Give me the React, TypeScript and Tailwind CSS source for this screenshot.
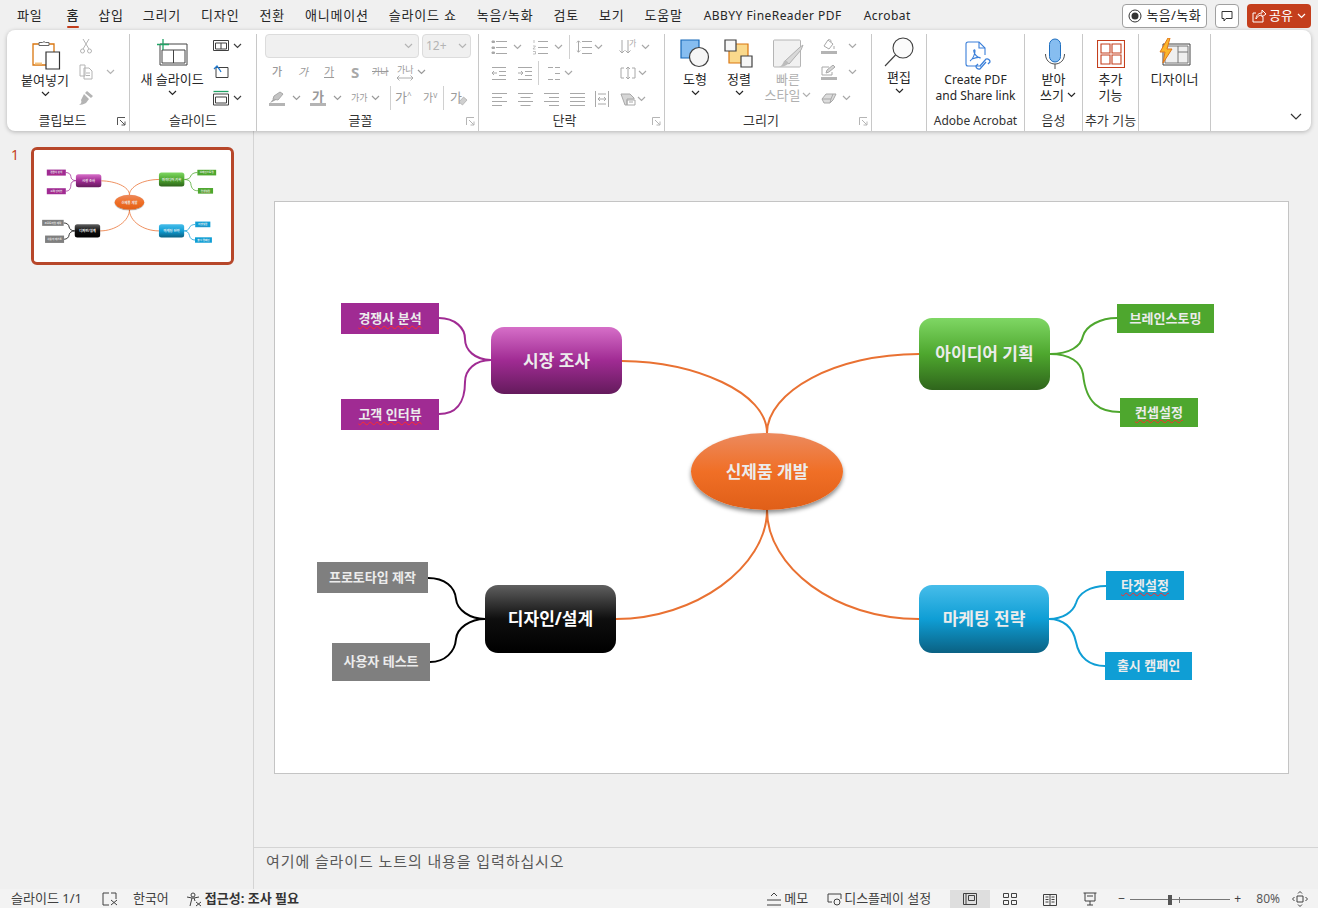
import type { ReactNode } from "react";

function Chev({ className = "" }: { className?: string }) {
  return (
    <svg width="9" height="6" viewBox="0 0 9 6" fill="none" stroke="currentColor" strokeWidth="1.2" className={`shrink-0 ${className}`}>
      <path d="M1 1l3.500 3.500L8 1" />
    </svg>
  );
}

function Ico({ w = 16, h = 16, children }: { w?: number; h?: number; children: ReactNode }) {
  return (
    <svg width={w} height={h} viewBox={`0 0 ${w} ${h}`} fill="none" stroke="currentColor" strokeWidth="1" className="shrink-0">
      {children}
    </svg>
  );
}

function Launcher({ dim = true }: { dim?: boolean }) {
  return (
    <svg width="9" height="9" viewBox="0 0 9 9" fill="none" stroke={dim ? "#b5b5b5" : "#555"} strokeWidth="1" className="absolute right-[3px] bottom-[5px]">
      <path d="M.5 8V.5H8M3 3l5 5M8 4.500V8H4.500" />
    </svg>
  );
}

function Group({ label, className, launcher, dim, children }: { label?: ReactNode; className: string; launcher?: boolean; dim?: boolean; children: ReactNode }) {
  return (
    <div className={`relative flex shrink-0 flex-col border-r border-[#c8c8c8] ${className}`}>
      <div className="h-[78px]">{children}</div>
      <div className={`text-center text-[13px] leading-[17px] text-[#333] whitespace-nowrap ${launcher ? "pr-[14px]" : ""}`}>{label}</div>
      {launcher && <Launcher dim={dim} />}
    </div>
  );
}

// paragraph glyphs: each row of the icon is a start x and a length
function Rows({ rows, children }: { rows: [number, number][]; children?: ReactNode }) {
  const step = rows.length > 1 ? 12 / (rows.length - 1) : 0;
  return (
    <Ico>
      {rows.map(([x, len], i) => (
        <path key={i} d={`M${x} ${2.500 + i * step}h${len}`} />
      ))}
      {children}
    </Ico>
  );
}

function Clipboard() {
  return (
    <svg width="30" height="32" viewBox="0 0 30 32" fill="none" className="ml-[3px] shrink-0">
      <path d="M1 5h21v21H1z" fill="#fff" stroke="#d9760f" strokeWidth="1.300" />
      <path d="M3 24.500h7" stroke="#f5c37f" strokeWidth="2" />
      <path d="M7 6.500V3.500h3.500a2 2 0 0 1 3 0H17v3z" fill="#fff" stroke="#666" />
      <path d="M14 13h13.500v17H14z" fill="#fff" stroke="#333" strokeWidth="1.200" />
    </svg>
  );
}

function NewSlide() {
  return (
    <svg width="32" height="28" viewBox="0 0 32 28" fill="none" className="shrink-0">
      <path d="M4 5h27v21H4z" stroke="#444" />
      <path d="M6 11h23v13H6zM17.500 11v13" stroke="#444" />
      <path d="M7 0v11M1 5.500h12" stroke="#21a366" strokeWidth="1.300" />
    </svg>
  );
}

function Shapes() {
  return (
    <svg width="30" height="30" viewBox="0 0 30 30" fill="none" className="shrink-0">
      <path d="M1 1h18v18H1z" fill="#86bdf0" stroke="#1668b8" strokeWidth="1.200" />
      <circle cx="19" cy="18" r="9.500" fill="#f6f6f6" stroke="#404040" strokeWidth="1.200" />
    </svg>
  );
}

function Arrange() {
  return (
    <svg width="30" height="30" viewBox="0 0 30 30" fill="none" className="shrink-0">
      <path d="M5 5h19v19H5z" fill="#fad98c" stroke="#d9760f" strokeWidth="1.200" />
      <path d="M1 1h11v11H1zM17 17h11v11H17z" fill="#f6f6f6" stroke="#404040" strokeWidth="1.200" />
    </svg>
  );
}

function QuickStyle() {
  return (
    <svg width="32" height="30" viewBox="0 0 32 30" fill="none" className="shrink-0">
      <path d="M1.500 2a1 1 0 0 1 1-1h25a1 1 0 0 1 1 1v25a1 1 0 0 1-1 1H2.500a1 1 0 0 1-1-1z" fill="#f1f1f1" stroke="#b5b5b5" />
      <path d="M13 22L27 9l4-3-2 5-12 14z" fill="#d8d8d8" stroke="#b0b0b0" />
      <path d="M12 22c3-1 5 2 4 3-2 2-6 3-9 3 3-1 4-4 5-6z" fill="#bcbcbc" />
    </svg>
  );
}

function Magnifier() {
  return (
    <svg width="30" height="30" viewBox="0 0 30 30" fill="none" className="shrink-0">
      <circle cx="19" cy="11" r="10" stroke="#404040" fill="#fbfbfb" strokeWidth="1.100" />
      <path d="M11.500 18L1 29" stroke="#404040" strokeWidth="1.100" />
    </svg>
  );
}

function PdfLink() {
  return (
    <svg width="27" height="32" viewBox="0 0 27 32" fill="none" stroke="#3a7fd9" strokeWidth="1.100" className="ml-[6px] shrink-0">
      <path d="M16 25H3a2 2 0 0 1-2-2V3a2 2 0 0 1 2-2h11l6 6v7" />
      <path d="M14 1v6h6" />
      <path d="M5 20c3-2 5-7 5-10 0-2-2-1-1 1 1 3 3 5 6 6 1 0-1-2-8 1" />
      <path d="M15 25l6-7a3 3 0 0 1 4 3l-2 2M21 21l-6 7a3 3 0 0 1-4-3l2-2" strokeWidth="1.300" />
    </svg>
  );
}

function Mic() {
  return (
    <svg width="22" height="32" viewBox="0 0 22 32" fill="none" className="shrink-0">
      <rect x="5.500" y="1" width="11" height="23" rx="5.500" fill="#86bdf0" stroke="#1f6fc0" />
      <path d="M1.500 16c0 6 4 10 9.500 10s9.500-4 9.500-10M11 26v5" stroke="#505050" />
    </svg>
  );
}

function Addins() {
  return (
    <svg width="28" height="28" viewBox="0 0 28 28" fill="none" stroke="#c43e1c" strokeWidth="1.100" className="shrink-0">
      <path d="M.5.500h27v27H.5zM4 4h9v9H4zM15 4h9v9h-9zM4 15h9v9H4zM15 15h9v9h-9z" />
    </svg>
  );
}

function Designer() {
  return (
    <svg width="32" height="28" viewBox="0 0 32 28" fill="none" className="shrink-0">
      <path d="M4 6h27v21H4z" stroke="#444" fill="#fbfbfb" />
      <path d="M6 8h23v17H6z" fill="#efefef" stroke="#777" />
      <path d="M19 8v17M19 14h10" stroke="#777" />
      <path d="M9 0L1 14h5l-2 11 9-14H8l3-11z" fill="#fbb72c" stroke="#e0761a" />
    </svg>
  );
}

function BigButton({ className, top, label, chev = true }: { className: string; top: ReactNode; label: ReactNode; chev?: boolean }) {
  return (
    <div className={`flex shrink-0 flex-col items-center text-[13px] leading-[16px] text-[#262626] ${className}`}>
      <div className="flex h-[37px] items-start justify-center pt-[5px]">{top}</div>
      {label}
      {chev && <Chev className="mt-[3px]" />}
    </div>
  );
}

function Swatch({ children }: { children: ReactNode }) {
  return <div className="flex w-[20px] flex-col items-center">{children}<div className="h-[3px] w-[16px] bg-[#b4b4b4]" /></div>;
}

const Divider = () => <div className="h-[24px] border-l border-[#d0d0d0]" />;

function Ribbon() {
  return (
    <div className="relative mx-[7px] flex h-[101px] shrink-0 rounded-lg bg-white pl-[3px] pt-[4px] shadow-[0_1px_4px_rgba(0,0,0,0.25)]">
      <Group label="클립보드" className="w-[120px]" launcher dim={false}>
        <div className="flex">
          <BigButton className="w-[70px]" top={<Clipboard />} label={<span className="mt-[1px]">붙여넣기</span>} />
          <div className="-ml-[2px] -mt-[1px] flex flex-col text-[#b4b4b4]">
            <div className="flex h-[26px] items-center">
              <Ico><path d="M5 1l6 10M11 1L5 11" /><circle cx="4.500" cy="13" r="2" /><circle cx="11.500" cy="13" r="2" /></Ico>
            </div>
            <div className="flex h-[26px] items-center gap-[12px]">
              <Ico><path d="M2 1h5v11H2zM6 4h5l3 3v8H6z" /><path d="M8 9h4M8 11.500h4" /></Ico>
              <Chev />
            </div>
            <div className="flex h-[26px] items-center">
              <svg width="16" height="16" viewBox="0 0 16 16" fill="#b4b4b4"><path d="M9 1l6 5-2 2-6-5zM6 4l5 5-3 4c-2 1-5 2-7 2 2-1 3-3 2-5z" /></svg>
            </div>
          </div>
        </div>
      </Group>

      <Group label="슬라이드" className="w-[127px]">
        <div className="flex pl-[10px]">
          <BigButton className="w-[64px]" top={<NewSlide />} label={<span className="whitespace-nowrap">새 슬라이드</span>} />
          <div className="-mt-[1px] flex flex-col pl-[9px] text-[#404040]">
            <div className="flex h-[26px] items-center gap-[4px]">
              <Ico><path d="M.5 2.500h15v10H.5zM2.500 5h11v6h-11zM8 5v6" /></Ico>
              <Chev />
            </div>
            <div className="flex h-[26px] items-center">
              <Ico><path d="M3 3.500h12v10H3z" stroke="#404040" /><path d="M1 5l3-3 2 3M4 2c2 3 3 4 4 6" stroke="#1f7ad1" strokeWidth="1.300" /></Ico>
            </div>
            <div className="flex h-[26px] items-center gap-[4px]">
              <Ico><path d="M.5 1.500h15" stroke="#21a366" strokeWidth="1.300" /><path d="M.5 4h15v11H.5zM2.500 7h11v6h-11z" /></Ico>
              <Chev />
            </div>
          </div>
        </div>
      </Group>

      <Group label="글꼴" className="w-[222px]" launcher>
        <div className="flex flex-col pl-[8px]">
          <div className="flex gap-[3px] pb-[1px]">
            <div className="flex h-[24px] w-[154px] items-center justify-end rounded border border-[#dcdcdc] bg-[#f0f0f0] pr-[5px] text-[#b4b4b4]"><Chev /></div>
            <div className="flex h-[24px] w-[49px] items-center justify-between rounded border border-[#dcdcdc] bg-[#f0f0f0] px-[3px] text-[12px] text-[#b4b4b4]">12+<Chev /></div>
          </div>
          <div className="flex h-[26px] items-center text-[11px] text-[#9a9a9a]">
            <span className="w-[26px] pl-[7px] font-medium">가</span>
            <span className="w-[26px] pl-[7px] italic">가</span>
            <span className="w-[26px] pl-[7px] underline">가</span>
            <span className="w-[26px] pl-[8px] text-[15px] font-bold text-[#a8a8a8]">S</span>
            <span className="w-[26px] pl-[3px] text-[9px] line-through">가나</span>
            <span className="flex w-[44px] items-center pl-[2px]">
              <span className="flex flex-col items-center text-[9px] leading-[11px]">
                가나
                <svg width="16" height="6" viewBox="0 0 16 6" fill="none" stroke="#9a9a9a" strokeWidth=".8"><path d="M0 3h16M2.500 .5L0 3l2.500 2.500M13.500 .5L16 3l-2.500 2.500" /></svg>
              </span>
              <Chev className="ml-[3px]" />
            </span>
          </div>
          <div className="flex h-[26px] items-center text-[#9a9a9a]">
            <div className="flex w-[41px] items-center gap-[5px] pl-[2px]">
              <Swatch><svg width="16" height="12" viewBox="0 0 16 12" fill="#c4c4c4" stroke="#a8a8a8"><path d="M4 8l1-3 6-4 3 2-5 6z" /><path d="M1 12l3-4 3 1z" stroke="none" fill="#a8a8a8" /></svg></Swatch>
              <Chev />
            </div>
            <div className="flex w-[41px] items-center gap-[5px] pl-[2px]">
              <Swatch><span className="text-[13px] font-bold leading-[13px]">가</span></Swatch>
              <Chev />
            </div>
            <div className="flex w-[41px] items-center gap-[3px] pl-[4px] text-[9px]">가가<Chev /></div>
            <div className="ml-[2px]"><Divider /></div>
            <span className="w-[26px] pl-[4px] text-[13px]">가<sup className="text-[8px]">^</sup></span>
            <span className="w-[26px] pl-[6px] text-[11px]">가<sup className="text-[8px]">v</sup></span>
            <Divider />
            <span className="pl-[6px] text-[13px]">가</span>
            <svg width="10" height="10" viewBox="0 0 10 10" fill="#cfcfcf" stroke="#a8a8a8" strokeWidth=".7" className="-ml-[4px] mt-[6px]"><path d="M5.500 1l3.500 3-4.500 5L1 6z" /></svg>
          </div>
        </div>
      </Group>

      <Group label="단락" className="w-[186px]" launcher>
        <div className="-mt-[1px] flex flex-col pl-[12px] text-[#a8a8a8]">
          <div className="flex h-[27px] items-center">
            <div className="w-[22px]"><Rows rows={[[5, 11], [5, 11], [5, 11]]}><path d="M1 2h2.500v1.500H1zM1 8h2.500v1.500H1zM1 13h2.500v1.500H1z" fill="currentColor" /></Rows></div>
            <div className="w-[19px]"><Chev /></div>
            <div className="w-[22px]"><Rows rows={[[6, 10], [6, 10], [6, 10]]}><path d="M2 1v3M1 7h2.500L1 10h2.500M1 12.500h2.500V15H1" strokeWidth=".7" /></Rows></div>
            <div className="w-[15px]"><Chev /></div>
            <Divider />
            <div className="flex w-[48px] items-center gap-[2px] pl-[6px]">
              <Rows rows={[[6, 10], [6, 10], [6, 10]]}><path d="M2.500 2v11M.8 3.500L2.500 1.800l1.700 1.700M.8 11.500l1.700 1.700 1.700-1.700" /></Rows>
              <Chev />
            </div>
            <div className="flex items-center gap-[1px]">
              <Ico><path d="M4 1v13M1.500 11.500L4 14l2.500-2.500M10 1v13M7.500 11.500L10 14l2.500-2.500" /></Ico>
              <span className="-ml-[6px] w-[8px] pb-[8px] text-[8px] leading-[8px]">가</span>
              <Chev className="ml-[3px]" />
            </div>
          </div>
          <div className="flex h-[26px] items-center">
            <div className="w-[26px]"><Rows rows={[[1, 14], [8, 7], [8, 7], [1, 14]]}><path d="M6 8H1M3 6L1 8l2 2" /></Rows></div>
            <div className="w-[21px]"><Rows rows={[[1, 14], [8, 7], [8, 7], [1, 14]]}><path d="M1 8h5M4 6l2 2-2 2" /></Rows></div>
            <Divider />
            <div className="flex w-[81px] items-center gap-[1px] pl-[8px]">
              <Rows rows={[[1, 5], [8, 5], [1, 5]]}><path d="M8 2.500h5M8 14.500h5" /></Rows>
              <Chev />
            </div>
            <div className="flex items-center gap-[1px]"><Ico><path d="M1 3h3M12 3h3M1 13h3M12 13h3M1 3v10M15 3v10M8 2v12M6 4l2-2 2 2M6 12l2 2 2-2" /></Ico><Chev className="ml-[1px]" /></div>
          </div>
          <div className="flex h-[26px] items-center">
            <div className="w-[26px]"><Rows rows={[[1, 15], [1, 10], [1, 15], [1, 10]]} /></div>
            <div className="w-[26px]"><Rows rows={[[1, 15], [3.5, 10], [1, 15], [3.5, 10]]} /></div>
            <div className="w-[26px]"><Rows rows={[[1, 15], [6, 10], [1, 15], [6, 10]]} /></div>
            <div className="w-[25px]"><Rows rows={[[1, 15], [1, 15], [1, 15], [1, 15]]} /></div>
            <div className="w-[26px]"><Ico><path d="M1.500 0v16M14.500 0v16M4 3h8M4 13h8M4 8h8M6 6L4 8l2 2M10 6l2 2-2 2" /></Ico></div>
            <div className="flex items-center gap-[1px]"><Ico><path d="M1 3h9l4 4v1H7v6H5z" fill="#d6d6d6" /><path d="M7 9h8v5H7zM9 11h4" /></Ico><Chev /></div>
          </div>
        </div>
      </Group>

      <Group label="그리기" className="w-[207px]" launcher>
        <div className="flex pl-[14px]">
          <BigButton className="w-[32px]" top={<Shapes />} label="도형" />
          <BigButton className="ml-[12px] w-[32px]" top={<Arrange />} label="정렬" />
          <div className="ml-[7px] flex w-[52px] flex-col items-center text-[13px] leading-[16px] text-[#b0b0b0]">
            <div className="flex h-[37px] pt-[5px]"><QuickStyle /></div>
            빠른
            <span className="flex items-center gap-[2px] whitespace-nowrap">스타일<Chev /></span>
          </div>
          <div className="-mt-[1px] flex flex-col pl-[5px] text-[#a8a8a8]">
            <div className="flex h-[26px] items-center gap-[9px]">
              <Swatch><svg width="16" height="12" viewBox="0 0 16 12" fill="none" stroke="#a8a8a8"><path d="M3 7l4-6 5 4-4 5z" /><path d="M7 1c1-1 3-1 3 2M13 7v3" /></svg></Swatch>
              <Chev />
            </div>
            <div className="flex h-[26px] items-center gap-[9px]">
              <Swatch><svg width="16" height="12" viewBox="0 0 16 12" fill="none" stroke="#a8a8a8"><path d="M8 2H1v8h10V7" /><path d="M5 8l1-3 6-5 2 2-6 5z" fill="#d6d6d6" /></svg></Swatch>
              <Chev />
            </div>
            <div className="flex h-[26px] items-center gap-[5px] pl-[2px]">
              <Ico><path d="M1 9l4-5h10l-3 6-3 3H3z" fill="#dcdcdc" /><path d="M1 9h9l2-5" /><path d="M10 9l-1 4" /></Ico>
              <Chev />
            </div>
          </div>
        </div>
      </Group>

      <Group className="w-[55px]">
        <BigButton className="w-full" top={<div className="-mt-[2px]"><Magnifier /></div>} label={<span className="-mt-[2px]">편집</span>} />
      </Group>

      <Group label={<span className="text-[12px]">Adobe Acrobat</span>} className="w-[98px]">
        <BigButton className="w-full" top={<div className="mt-[2px]"><PdfLink /></div>} chev={false} label={<span className="mt-[1px] text-center text-[12px] whitespace-nowrap">Create PDF<br />and Share link</span>} />
      </Group>

      <Group label="음성" className="w-[58px]">
        <BigButton className="w-full" top={<div className="-mt-[1px] ml-[2px]"><Mic /></div>} chev={false} label={<span className="flex flex-col items-center">받아<span className="flex items-center gap-[3px] pl-[9px]">쓰기<Chev /></span></span>} />
      </Group>

      <Group label="추가 기능" className="w-[56px]">
        <BigButton className="w-full" top={<div className="mt-[1px]"><Addins /></div>} chev={false} label={<span className="text-center">추가<br />기능</span>} />
      </Group>

      <Group className="w-[72px]">
        <BigButton className="w-full" top={<div className="-mt-[1px]"><Designer /></div>} chev={false} label="디자이너" />
      </Group>

      <svg width="12" height="8" viewBox="0 0 12 8" fill="none" stroke="#333" strokeWidth="1.200" className="absolute right-[9px] bottom-[10px]">
        <path d="M1 1l5 5 5-5" />
      </svg>
    </div>
  );
}

const tabs = ["삽입", "그리기", "디자인", "전환", "애니메이션", "슬라이드 쇼", "녹음/녹화", "검토", "보기", "도움말"];

function TabBar() {
  return (
    <div className="flex h-[30px] shrink-0 items-center pl-[17px] pr-[7px] pt-[1px] text-[13px] tracking-[0.8px] text-[#262626]">
      <span>파일</span>
      <span className="relative ml-[24px] font-medium">
        홈
        <span className="absolute -bottom-[3px] left-0 right-0 h-[2px] rounded bg-[#c43e1c]" />
      </span>
      <div className="ml-[19px] flex gap-[20px] whitespace-nowrap">
        {tabs.map((t, i) => (
          <span key={t} className={i === 1 ? "-ml-[1px]" : ""}>{t}</span>
        ))}
      </div>
      <span className="ml-[21px] whitespace-nowrap text-[12px] tracking-[0.45px]">ABBYY FineReader PDF</span>
      <span className="ml-[22px] text-[12px] tracking-[0.45px]">Acrobat</span>
      <div className="ml-auto flex items-center gap-[8px] tracking-normal">
        <div className="flex h-[24px] items-center gap-[4px] rounded border border-[#a0a0a0] bg-white px-[5px]">
          <svg width="14" height="14" viewBox="0 0 14 14" fill="none"><circle cx="7" cy="7" r="6" stroke="#333" /><circle cx="7" cy="7" r="3.500" fill="#333" /></svg>
          <span className="text-[13px] tracking-[0.4px]">녹음/녹화</span>
        </div>
        <div className="flex h-[24px] w-[24px] items-center justify-center rounded border border-[#a0a0a0] bg-white">
          <svg width="12" height="12" viewBox="0 0 12 12" fill="none" stroke="#333"><path d="M1 1.500h10v7H5L3 11V8.500H1z" /></svg>
        </div>
        <div className="flex h-[24px] items-center gap-[3px] rounded bg-[#c43e1c] px-[5px] text-white">
          <svg width="14" height="14" viewBox="0 0 14 14" fill="none" stroke="#fff"><path d="M11 8v5H1V4h3M4 10c0-4 3-6 6-6V1l4 4-4 3V6c-3 0-5 2-6 4z" /></svg>
          <span className="text-[13px]">공유</span>
          <Chev className="ml-[1px]" />
        </div>
      </div>
    </div>
  );
}

const nodeText = "flex items-center justify-center font-bold text-[#ececec] whitespace-nowrap";
const leaf = `absolute ${nodeText} text-[13px]`;
const branch = `absolute ${nodeText} rounded-[13px] text-[17px]`;
const wavy = "underline decoration-wavy decoration-[#ff2a2a] decoration-[1.2px] underline-offset-2";

function Slide({ className, line = 2 }: { className: string; line?: number }) {
  return (
    <div className={`relative h-[571px] w-[1013px] bg-white ${className}`}>
      <svg width="1013" height="571" viewBox="0 0 1013 571" fill="none" strokeWidth={line} className="absolute left-0 top-0">
        <g stroke="#e97132">
          <path d="M347 159C420 160 492 190 492 231" />
          <path d="M492 231C492 190 560 152 644 152" />
          <path d="M492 308C492 365 420 417 341 417" />
          <path d="M492 308C492 365 560 417 644 417" />
        </g>
        <g stroke="#a02b93">
          <path d="M164 116C180 116 190 126 190 137C190 148 200 158 216 158" />
          <path d="M164 212C180 212 190 202 190 180C190 168 200 158 216 158" />
        </g>
        <g stroke="#4ea72e">
          <path d="M775 152C795 152 806 144 808 134C811 124 825 116 842 116" />
          <path d="M775 152C795 152 806 160 808 172C811 202 825 210 845 210" />
        </g>
        <g stroke="#000000">
          <path d="M153 376C170 376 180 385 181 397C182 408 195 417 210 417" />
          <path d="M155 460C170 460 180 450 181 437C182 426 195 417 210 417" />
        </g>
        <g stroke="#0f9ed5">
          <path d="M774 417C788 417 798 410 801 401C804 391 815 384 831 384" />
          <path d="M774 417C788 417 798 425 801 440C804 456 815 464 830 464" />
        </g>
      </svg>

      <div className={`${leaf} left-[66px] top-[101px] h-[31px] w-[98px] bg-[#a02b93]`}><span className={wavy}>경쟁사 분석</span></div>
      <div className={`${leaf} left-[66px] top-[197px] h-[31px] w-[98px] bg-[#a02b93]`}><span className={wavy}>고객 인터뷰</span></div>
      <div className={`${branch} left-[216px] top-[125px] h-[67px] w-[131px] bg-[linear-gradient(#d66fc8,#a02b93_50%,#641b5c)]`}>시장 조사</div>

      <div className={`${branch} left-[644px] top-[116px] h-[72px] w-[131px] bg-[linear-gradient(#7fd764,#4ea72e_50%,#2f651c)]`}>아이디어 기획</div>
      <div className={`${leaf} left-[842px] top-[102px] h-[29px] w-[97px] bg-[#4ea72e]`}>브레인스토밍</div>
      <div className={`${leaf} left-[845px] top-[196px] h-[29px] w-[78px] bg-[#4ea72e]`}><span className={wavy}>컨셉설정</span></div>

      <div className={`${branch} left-[210px] top-[383px] h-[68px] w-[131px] bg-[linear-gradient(#606060,#0e0e0e_50%,#000)] text-white`}>디자인/설계</div>
      <div className={`${leaf} left-[42px] top-[360px] h-[31px] w-[111px] bg-[#7f7f7f]`}>프로토타입 제작</div>
      <div className={`${leaf} left-[57px] top-[441px] h-[38px] w-[98px] bg-[#7f7f7f]`}>사용자 테스트</div>

      <div className={`${branch} left-[644px] top-[383px] h-[68px] w-[130px] bg-[linear-gradient(#47bdea,#0f9ed5_50%,#0a6183)]`}>마케팅 전략</div>
      <div className={`${leaf} left-[831px] top-[369px] h-[29px] w-[78px] bg-[#0f9ed5]`}><span className={wavy}>타겟설정</span></div>
      <div className={`${leaf} left-[830px] top-[450px] h-[28px] w-[87px] bg-[#0f9ed5]`}>출시 캠페인</div>

      <div className="absolute left-[416px] top-[231px] flex h-[77px] w-[152px] items-center justify-center rounded-[50%] bg-[linear-gradient(#ec8a5e,#f06f26_50%,#e05f18)] text-[17px] font-bold text-[#ececec] shadow-[0_3px_4px_rgba(0,0,0,0.45)]">
        신제품 개발
      </div>
    </div>
  );
}

function StatusBar() {
  return (
    <div className="flex h-[19px] shrink-0 items-center bg-[#f3f3f3] pl-[11px] pt-[1px] text-[13px] text-[#404040]">
      <span className="whitespace-nowrap">슬라이드 1/1</span>
      <svg width="16" height="14" viewBox="0 0 16 14" fill="none" stroke="#404040" className="ml-[20px]"><path d="M7 1H1v12h6M9 1h5v6M9 8l6 5M15 8l-6 5" /></svg>
      <span className="ml-[15px]">한국어</span>
      <svg width="16" height="15" viewBox="0 0 16 15" fill="none" stroke="#404040" className="ml-[17px]"><circle cx="7" cy="3" r="2" /><path d="M1 5l5 1h2l5-1M6 6l-2 8M8 6l1 3M10 10l5 4M15 10l-5 4" /></svg>
      <span className="ml-[3px] font-bold whitespace-nowrap text-[#333]">접근성: 조사 필요</span>

      <div className="ml-auto flex h-full items-center pr-[10px]">
        <svg width="16" height="14" viewBox="0 0 16 14" fill="none" stroke="#404040"><path d="M1 8h14M1 13h14M5 4l3-3 3 3" /></svg>
        <span className="ml-[2px]">메모</span>
        <svg width="15" height="14" viewBox="0 0 15 14" fill="none" stroke="#404040" className="ml-[19px]"><path d="M5 10H1V2h13v5" /><circle cx="10" cy="10" r="3" /></svg>
        <span className="ml-[2px] whitespace-nowrap">디스플레이 설정</span>
        <div className="ml-[19px] flex h-full w-[40px] items-center justify-center bg-[#dedede]">
          <svg width="14" height="12" viewBox="0 0 14 12" fill="none" stroke="#404040"><path d="M.5.500h13v11H.5zM3 .500v11M5.500 2.500h6v5h-6z" /></svg>
        </div>
        <div className="flex w-[40px] justify-center">
          <svg width="14" height="12" viewBox="0 0 14 12" fill="none" stroke="#404040"><path d="M.5.500h5v4h-5zM8.500.500h5v4h-5zM.5 7.500h5v4h-5zM8.500 7.500h5v4h-5z" /></svg>
        </div>
        <div className="flex w-[40px] justify-center">
          <svg width="14" height="13" viewBox="0 0 14 13" fill="none" stroke="#404040"><path d="M.5 1.500h13v11H.5zM7 1.500v11M2.500 4h3M2.500 6.500h3M2.500 9h3M8.500 4h3M8.500 6.500h3M8.500 9h3" /></svg>
        </div>
        <div className="flex w-[40px] justify-center">
          <svg width="14" height="14" viewBox="0 0 14 14" fill="none" stroke="#404040"><path d="M.5 1h13M2 1v8h10V1M7 9v4M4 13h6M4 4h6" /></svg>
        </div>
        <span className="ml-[8px] w-[10px] text-[12px]">−</span>
        <div className="relative ml-[2px] flex h-full w-[100px] items-center">
          <div className="h-px w-full bg-[#777]" />
          <div className="absolute left-[38px] top-[5px] h-[10px] w-[4px] bg-[#555]" />
          <div className="absolute left-[49px] top-[7px] h-[6px] w-px bg-[#777]" />
        </div>
        <span className="ml-[4px] w-[12px] text-[12px]">+</span>
        <span className="ml-[10px] text-[12px] text-[#595959]">80%</span>
        <svg width="16" height="16" viewBox="0 0 16 16" fill="none" stroke="#404040" className="ml-[12px]"><path d="M5 5h6v6H5zM6 2.500l2-2 2 2M6 13.500l2 2 2-2M2.500 6l-2 2 2 2M13.500 6l2 2-2 2" /></svg>
      </div>
    </div>
  );
}

export default function App() {
  return (
    <div className="flex h-screen w-full flex-col overflow-hidden bg-[#f0f0f0] font-['Noto_Sans','Noto_Sans_CJK_KR',sans-serif]">
      <TabBar />
      <Ribbon />
      <div className="flex min-h-0 flex-1">
        <div className="flex w-[254px] shrink-0 border-r border-[#d4d4d4] pl-[11px] pt-[16px]">
          <span className="w-[20px] text-[14px] leading-[16px] text-[#c43e1c]">1</span>
          <div className="h-[118px] w-[203px] overflow-hidden rounded-[6px] border-[3px] border-[#b7472a] bg-white">
            <Slide className="origin-top-left scale-[0.194]" line={4} />
          </div>
        </div>
        <div className="flex min-w-0 flex-1 flex-col">
          <div className="flex-1 pl-[21px] pt-[71px]">
            <Slide className="outline-1 outline-[#c4c4c4]" />
          </div>
          <div className="h-[42px] shrink-0 border-t border-[#d4d4d4] pl-[12px] pt-[2px] text-[15px] tracking-[0.9px] text-[#595959]">
            여기에 슬라이드 노트의 내용을 입력하십시오
          </div>
        </div>
      </div>
      <StatusBar />
    </div>
  );
}
